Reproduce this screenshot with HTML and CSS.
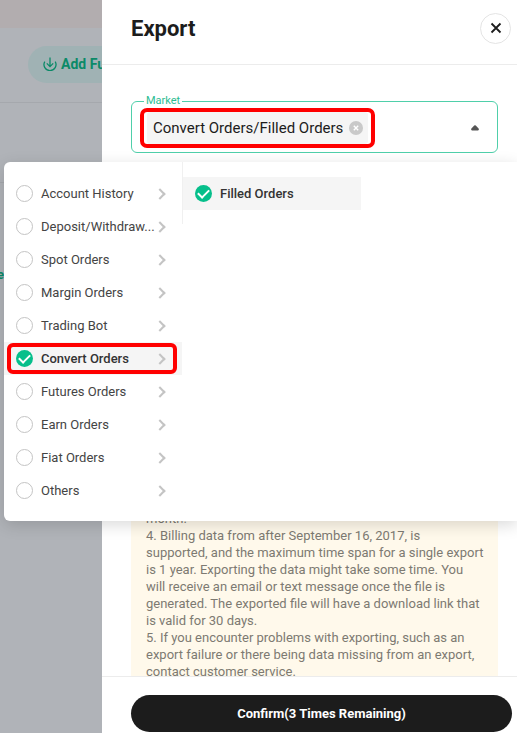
FILE: index.html
```html
<!DOCTYPE html>
<html lang="en">
<head>
    <meta charset="UTF-8">
    <meta name="viewport" content="width=device-width, initial-scale=1.0">
    <title>Export</title>
    <link rel="stylesheet" href="styles.css">
</head>
<body>
    <!-- dimmed page behind the drawer -->
    <div class="page">
        <div class="page-banner"></div>
        <div class="page-actions">
            <button type="button" class="add-funds">
                <svg width="14" height="14" viewBox="0 0 14 14" fill="none" stroke="currentColor" stroke-width="1.3">
                    <path d="M1.8 4.6A6 6 0 1 0 12.2 4.6M7 0.6V9.4M3.8 6.4L7 9.6L10.2 6.4"/>
                </svg>
                Add Funds
            </button>
        </div>
        <div class="page-tabs"></div>
        <div class="page-content"><a href="#">e</a></div>
    </div>

    <div class="drawer">
        <div class="drawer-header">
            <h1>Export</h1>
            <button type="button" class="close" aria-label="Close">
                <svg width="12" height="12" viewBox="0 0 12 12" fill="none" stroke="currentColor" stroke-width="1.8">
                    <path d="M1.5 1.5L10.5 10.5M10.5 1.5L1.5 10.5"/>
                </svg>
            </button>
        </div>

        <div class="drawer-body">
            <div class="market">
                <fieldset class="field">
                    <legend>Market</legend>
                    <div class="field-row">
                        <div class="chip highlight">
                            <span>Convert Orders/Filled Orders</span>
                            <button type="button" class="chip-clear" aria-label="Clear">
                                <svg width="14" height="14" viewBox="0 0 14 14" fill="none">
                                    <circle cx="7" cy="7" r="7" fill="#c9c9c9"/>
                                    <path d="M4.8 4.8L9.2 9.2M9.2 4.8L4.8 9.2" stroke="#fff" stroke-width="1.4"/>
                                </svg>
                            </button>
                        </div>
                        <button type="button" class="toggle" aria-label="Toggle menu">
                            <svg width="8" height="6" viewBox="0 0 8 6">
                                <path d="M3.2 0.6Q4 -0.2 4.8 0.6L7.6 3.4Q8.4 5 7 5.4H1Q-0.4 5 0.4 3.4Z" fill="#555"/>
                            </svg>
                        </button>
                    </div>
                </fieldset>

                <div class="menu">
                    <div class="menu-list">
                        <label class="item"><input type="radio" name="market"><span>Account History</span><i class="arrow"></i></label>
                        <label class="item"><input type="radio" name="market"><span>Deposit/Withdraw...</span><i class="arrow"></i></label>
                        <label class="item"><input type="radio" name="market"><span>Spot Orders</span><i class="arrow"></i></label>
                        <label class="item"><input type="radio" name="market"><span>Margin Orders</span><i class="arrow"></i></label>
                        <label class="item"><input type="radio" name="market"><span>Trading Bot</span><i class="arrow"></i></label>
                        <label class="item active marked"><input type="radio" name="market" checked><span>Convert Orders</span><i class="arrow"></i></label>
                        <label class="item"><input type="radio" name="market"><span>Futures Orders</span><i class="arrow"></i></label>
                        <label class="item"><input type="radio" name="market"><span>Earn Orders</span><i class="arrow"></i></label>
                        <label class="item"><input type="radio" name="market"><span>Fiat Orders</span><i class="arrow"></i></label>
                        <label class="item"><input type="radio" name="market"><span>Others</span><i class="arrow"></i></label>
                    </div>
                    <div class="menu-list sub">
                        <label class="item active"><input type="radio" name="type" checked><span>Filled Orders</span></label>
                    </div>
                </div>
            </div>

            <div class="notice">
                <div class="notice-text">
                    <p>month.</p>
                    <p>4. Billing data from after September 16, 2017, is<br>
                    supported, and the maximum time span for a single export<br>
                    is 1 year. Exporting the data might take some time. You<br>
                    will receive an email or text message once the file is<br>
                    generated. The exported file will have a download link that<br>
                    is valid for 30 days.</p>
                    <p>5. If you encounter problems with exporting, such as an<br>
                    export failure or there being data missing from an export,<br>
                    contact customer service.</p>
                </div>
            </div>
        </div>

        <div class="drawer-footer">
            <button type="button" class="confirm">Confirm(3 Times Remaining)</button>
        </div>
    </div>
</body>
</html>
```
FILE: styles.css
```css
* {
    box-sizing: border-box;
}

body {
    display: flex;
    height: 100vh;
    margin: 0;
    overflow: hidden;
    font-family: Roboto, Arial, sans-serif;
    font-size: 13px;
    color: #1c1c1c;
    background-color: #fff;
}

button {
    padding: 0;
    border: none;
    background: none;
    font-family: inherit;
    color: inherit;
    cursor: pointer;
}

/* page behind */
.page {
    flex: 0 0 102px;
    overflow: hidden;
    background-color: #b0b3b8;
}

.page-banner {
    height: 28px;
    background-color: #b2adaf;
}

.page-actions {
    height: 75px;
    padding: 18px 0 0 28px;
    border-bottom: 1px solid #a5a8ad;
}

.add-funds {
    display: flex;
    align-items: center;
    gap: 4px;
    width: 130px;
    height: 37px;
    padding: 0 0 2px 15px;
    border-radius: 19px;
    background-color: #a0b2b4;
    color: #0b8a68;
    font-size: 14px;
    font-weight: 700;
    white-space: nowrap;
}

.page-tabs {
    height: 80px;
    border-bottom: 1px solid #a5a8ad;
}

.page-content {
    padding-top: 84px;
}

.page-content a {
    display: flex;
    justify-content: flex-end;
    width: 4px;
    color: #0b8a68;
    font-weight: 700;
    text-decoration: none;
}

/* drawer */
.drawer {
    flex: 1;
    min-width: 0;
    display: flex;
    flex-direction: column;
}

.drawer-header {
    display: flex;
    justify-content: space-between;
    align-items: center;
    height: 65px;
    padding: 0 6px 8px 29px;
    border-bottom: 1px solid #ececec;
}

.drawer-header h1 {
    margin: 0;
    font-size: 22px;
    font-weight: 700;
}

.close {
    display: flex;
    justify-content: center;
    align-items: center;
    width: 31px;
    height: 31px;
    border: 1px solid #e4e4e4;
    border-radius: 50%;
}

.drawer-body {
    flex: 1;
    min-height: 0;
    display: flex;
    flex-direction: column;
    gap: 16px;
    padding: 29px 19px 0 29px;
}

.market {
    position: relative;
}

.field {
    min-width: 0;
    margin: 0;
    padding: 0 14px 4px 8px;
    border: 1px solid #4fcfaa;
    border-radius: 6px;
}

.field legend {
    margin-left: 4px;
    padding: 0 2px;
    font-size: 11px;
    line-height: 14px;
    color: #2dbd93;
}

.field-row {
    display: flex;
    justify-content: space-between;
    align-items: center;
}

.chip {
    display: flex;
    align-items: center;
    gap: 6px;
    height: 40px;
    padding: 0 8px 0 9px;
    background-color: #f5f5f5;
    font-size: 15px;
}

.highlight {
    border: 4px solid #f00;
    border-radius: 7px;
    box-shadow: inset 3px 0 #fff, inset -3px 0 #fff;
}

.chip-clear,
.toggle {
    display: flex;
}

.toggle {
    padding: 4px;
}

/* dropdown menu */
.menu {
    position: absolute;
    top: calc(100% + 9px);
    left: -127px;
    right: -19px;
    z-index: 1;
    display: flex;
    align-items: flex-start;
    border-radius: 6px 0 0 6px;
    background-color: #fff;
    box-shadow: 0 4px 16px rgba(0, 0, 0, 0.15);
}

.menu-list {
    width: 178px;
    padding: 15px 0 14px;
}

.sub {
    width: 179px;
    border-left: 1px solid #f0f0f0;
}

.item {
    position: relative;
    display: flex;
    align-items: center;
    gap: 8px;
    height: 33px;
    padding: 0 14px 0 12px;
    color: #444;
    cursor: pointer;
}

.item span {
    flex: 1;
    white-space: nowrap;
}

.item.active {
    background-color: #f5f5f5;
    color: #333;
    font-weight: 500;
}

.item.marked::after {
    content: "";
    position: absolute;
    inset: 1px 5px 1px 3px;
    border: 4px solid #f00;
    border-radius: 6px;
}

.item input {
    appearance: none;
    flex: none;
    width: 17px;
    height: 17px;
    margin: 0;
    border: 1px solid #c4c4c4;
    border-radius: 50%;
}

.item input:checked {
    display: grid;
    place-items: center;
    border: none;
    background-color: #06bf8b;
}

.item input:checked::before {
    content: "";
    width: 9px;
    height: 5px;
    margin-bottom: 3px;
    border: solid #fff;
    border-width: 0 0 2px 2px;
    transform: rotate(-45deg);
}

.arrow {
    flex: none;
    width: 8px;
    height: 8px;
    margin: 0 4px 0 -8px;
    border: solid #c4c4c4;
    border-width: 2px 2px 0 0;
    transform: rotate(45deg);
}

/* notice */
.notice {
    flex: 1;
    min-height: 0;
    display: flex;
    flex-direction: column;
    justify-content: flex-end;
    overflow: hidden;
    padding: 0 15px;
    background-color: #fff9eb;
    color: #7d7a72;
    line-height: 17px;
    white-space: nowrap;
}

/* scrolled almost to the end */
.notice-text {
    margin-bottom: -4px;
}

.notice p {
    margin: 0;
}

.drawer-footer {
    position: relative;
    padding: 18px 5px 1px 29px;
    border-top: 1px solid #ececec;
}

.confirm {
    display: block;
    width: 100%;
    height: 37px;
    border-radius: 19px;
    background-color: #1c1c1c;
    color: #fff;
    font-size: 13px;
    font-weight: 700;
}
```
